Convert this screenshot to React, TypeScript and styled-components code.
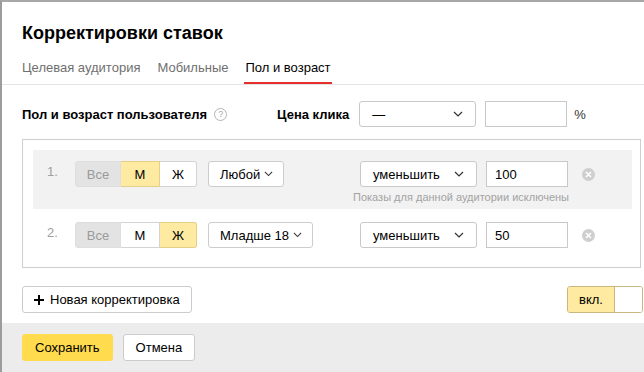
import React from "react";
import styled, { createGlobalStyle } from "styled-components";

const Global = createGlobalStyle`
  html, body { margin: 0; padding: 0; background: #fff; }
  body { font-family: "Liberation Sans", Arial, sans-serif; color: #000; }
  * { box-sizing: border-box; }
`;

const Dialog = styled.div`
  width: 644px;
  height: 372px;
  border-top: 2px solid #a8a8a8;
  border-left: 2px solid #9c9c9c;
  display: flex;
  flex-direction: column;
  overflow: hidden;
`;

const Title = styled.h1`
  margin: 19px 0 0 20px;
  font-size: 18px;
  line-height: 24px;
  font-weight: bold;
`;

const Tabs = styled.div`
  margin-top: 11px;
  display: flex;
  gap: 15px;
  padding-left: 19px;
  border-bottom: 1px solid #e4e4e4;
`;

const Tab = styled.div<{ $active?: boolean }>`
  padding: 3px 1px 5px;
  font-size: 13px;
  line-height: 18px;
  color: ${(p) => (p.$active ? "#000" : "#6f6f6f")};
  border-bottom: 2px solid ${(p) => (p.$active ? "#e62e2e" : "transparent")};
`;

const Body = styled.div`
  padding: 0 3px 0 20px;
`;

const FieldRow = styled.div`
  margin-top: 16px;
  display: flex;
  align-items: center;
  height: 26px;
  font-size: 13px;
`;

const FieldLabel = styled.div`
  width: 255px;
  font-weight: bold;
  display: flex;
  align-items: center;
  gap: 7px;
`;

const Help = styled.span`
  width: 13px;
  height: 13px;
  border: 1px solid #b4b4b4;
  border-radius: 50%;
  color: #a8a8a8;
  font-size: 9px;
  font-weight: normal;
  display: inline-flex;
  align-items: center;
  justify-content: center;
`;

const PriceLabel = styled.div`
  font-weight: bold;
  margin-right: 10px;
`;

const Select = styled.div<{ $w: number }>`
  width: ${(p) => p.$w}px;
  height: 26px;
  border: 1px solid #c9c9c9;
  border-radius: 3px;
  background: #fff;
  padding: 0 12px;
  display: flex;
  align-items: center;
  justify-content: space-between;
  font-size: 13px;
`;

const Input = styled.div<{ $w: number }>`
  width: ${(p) => p.$w}px;
  height: 26px;
  border: 1px solid #c9c9c9;
  background: #fff;
  padding: 0 8px;
  display: flex;
  align-items: center;
  font-size: 13px;
  margin-left: 9px;
`;

const Percent = styled.span`
  margin-left: 7px;
  color: #333;
`;

const Box = styled.div`
  margin-top: 12px;
  border: 1px solid #cfcfcf;
  padding: 10px 8px 10px 10px;
  display: flex;
  flex-direction: column;
  gap: 2px;
`;

const Row = styled.div<{ $shaded?: boolean }>`
  background: ${(p) => (p.$shaded ? "#f2f2f2" : "transparent")};
  padding: 11px 37px ${(p) => (p.$shaded ? "5px" : "9px")} 14px;
  display: flex;
  align-items: flex-start;
  font-size: 13px;
`;

const Num = styled.div`
  width: 28px;
  height: 26px;
  line-height: 22px;
  color: #a0a0a0;
`;

const Seg = styled.div`
  display: flex;
  height: 26px;
`;

const SegItem = styled.div<{ $kind: "dis" | "on" | "off"; $w: number }>`
  width: ${(p) => p.$w}px;
  display: flex;
  align-items: center;
  justify-content: center;
  border: 1px solid
    ${(p) => (p.$kind === "on" ? "#e3cf86" : p.$kind === "dis" ? "#dedede" : "#d3d3d3")};
  background: ${(p) => (p.$kind === "on" ? "#feeaa1" : p.$kind === "dis" ? "#e3e3e3" : "#fff")};
  color: ${(p) => (p.$kind === "dis" ? "#9a9a9a" : "#000")};
  &:first-child { border-radius: 3px 0 0 3px; }
  &:last-child { border-radius: 0 3px 3px 0; }
  & + & { border-left: none; }
`;

const Drop = styled.div`
  margin-left: 11px;
  height: 26px;
  border: 1px solid #cdcdcd;
  border-radius: 3px;
  background: #fff;
  padding: 0 10px 0 11px;
  display: flex;
  align-items: center;
  gap: 4px;
`;

const Right = styled.div`
  margin-left: auto;
  display: flex;
  flex-direction: column;
  align-items: flex-end;
`;

const Controls = styled.div`
  display: flex;
  align-items: center;
`;

const Clear = styled.span`
  margin-left: 14px;
  width: 13px;
  height: 13px;
  border-radius: 50%;
  background: #cfcfcf;
  display: inline-flex;
  align-items: center;
  justify-content: center;
`;

const Caption = styled.div`
  margin: 3px 26px 0 0;
  font-size: 11px;
  line-height: 14px;
  color: #a3a3a3;
`;

const BottomRow = styled.div`
  margin-top: 18px;
  margin-right: -2px;
  display: flex;
  align-items: center;
  justify-content: space-between;
`;

const Button = styled.div<{ $primary?: boolean; $px?: number }>`
  height: 27px;
  padding: 0 ${(p) => p.$px ?? 12}px;
  border-radius: 3px;
  border: 1px solid ${(p) => (p.$primary ? "#ffdb4d" : "#cccccc")};
  background: ${(p) => (p.$primary ? "#ffdb4d" : "#fff")};
  display: inline-flex;
  align-items: center;
  gap: 6px;
  font-size: 13px;
`;

const Toggle = styled.div`
  display: flex;
  height: 27px;
  border: 1px solid #c8b880;
  border-radius: 3px;
  overflow: hidden;
`;

const ToggleOn = styled.div`
  width: 47px;
  background: #feeaa1;
  border-right: 1px solid #c8b880;
  display: flex;
  align-items: center;
  justify-content: center;
  font-size: 13px;
`;

const ToggleKnob = styled.div`
  width: 27px;
  background: #fff;
`;

const Footer = styled.div`
  margin-top: 10px;
  flex: 1;
  background: #ececec;
  padding: 11px 20px 0;
  display: flex;
  gap: 10px;
  align-items: flex-start;
`;

const Chevron = ({ w = 10 }: { w?: number }) => (
  <svg width={w} height={w / 2 + 1} viewBox="0 0 10 6" fill="none">
    <path d="M1 1l4 4 4-4" stroke="#333" strokeWidth="1.2" />
  </svg>
);

const ClearIcon = () => (
  <Clear>
    <svg width="7" height="7" viewBox="0 0 7 7">
      <path d="M1 1l5 5M6 1L1 6" stroke="#fff" strokeWidth="1.6" />
    </svg>
  </Clear>
);

const rows = [
  { n: "1.", sex: "M", age: "Любой", val: "100", caption: true },
  { n: "2.", sex: "F", age: "Младше 18", val: "50", caption: false },
];

export default function App() {
  return (
    <>
      <Global />
      <Dialog>
        <Title>Корректировки ставок</Title>
        <Tabs>
          <Tab>Целевая аудитория</Tab>
          <Tab>Мобильные</Tab>
          <Tab $active>Пол и возраст</Tab>
        </Tabs>
        <Body>
          <FieldRow>
            <FieldLabel>
              Пол и возраст пользователя <Help>?</Help>
            </FieldLabel>
            <PriceLabel>Цена клика</PriceLabel>
            <Select $w={117}>
              <span>—</span>
              <Chevron />
            </Select>
            <Input $w={82} />
            <Percent>%</Percent>
          </FieldRow>
          <Box>
            {rows.map((r) => (
              <Row key={r.n} $shaded={r.caption}>
                <Num>{r.n}</Num>
                <Seg>
                  <SegItem $kind="dis" $w={46}>Все</SegItem>
                  <SegItem $kind={r.sex === "M" ? "on" : "off"} $w={39}>М</SegItem>
                  <SegItem $kind={r.sex === "F" ? "on" : "off"} $w={37}>Ж</SegItem>
                </Seg>
                <Drop>
                  {r.age}
                  <Chevron w={9} />
                </Drop>
                <Right>
                  <Controls>
                    <Select $w={117}>
                      <span>уменьшить</span>
                      <Chevron />
                    </Select>
                    <Input $w={82}>{r.val}</Input>
                    <ClearIcon />
                  </Controls>
                  {r.caption && <Caption>Показы для данной аудитории исключены</Caption>}
                </Right>
              </Row>
            ))}
          </Box>
          <BottomRow>
            <Button $px={11}>
              <svg width="10" height="10" viewBox="0 0 10 10">
                <path d="M5 0v10M0 5h10" stroke="#000" strokeWidth="2" />
              </svg>
              Новая корректировка
            </Button>
            <Toggle>
              <ToggleOn>вкл.</ToggleOn>
              <ToggleKnob />
            </Toggle>
          </BottomRow>
        </Body>
        <Footer>
          <Button $primary>Сохранить</Button>
          <Button>Отмена</Button>
        </Footer>
      </Dialog>
    </>
  );
}
